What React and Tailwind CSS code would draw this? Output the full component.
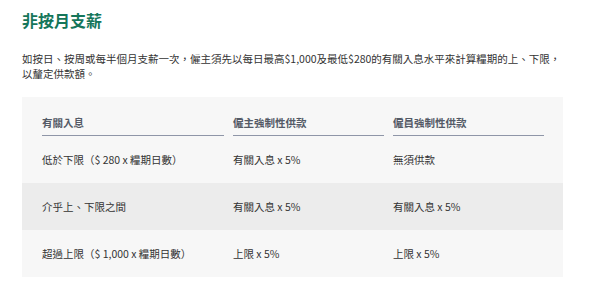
export default function App() {
  const rows = [
    { a: "低於下限（$ 280 x 糧期日數）", b: "有關入息 x 5%", c: "無須供款", bg: "bg-[#f7f7f7]" },
    { a: "介乎上、下限之間", b: "有關入息 x 5%", c: "有關入息 x 5%", bg: "bg-[#ececec]" },
    { a: "超過上限（$ 1,000 x 糧期日數）", b: "上限 x 5%", c: "上限 x 5%", bg: "bg-[#f7f7f7]" },
  ];
  return (
    <div className="w-[600px] h-[290px] bg-white px-[22px] overflow-hidden text-[#333] font-['Noto_Sans_CJK_TC','Noto_Sans',sans-serif]">
      <h1 className="pt-[8px] text-[16px] leading-[24px] font-bold text-[#15765a]">非按月支薪</h1>
      <p className="mt-[19px] text-[10.5px] leading-[15px] whitespace-nowrap">
        如按日、按周或每半個月支薪一次，僱主須先以每日最高$1,000及最低$280的有關入息水平來計算糧期的上、下限，
        <br />
        以釐定供款額。
      </p>
      <div className="mt-[16px] w-[541px] text-[10.5px] leading-[15px]">
        <div className="bg-[#f7f7f7] px-[20px] pt-[18px] grid grid-cols-[182px_151px_151px] gap-x-[9px] font-bold text-[#545a66]">
          <div className="pb-[5px] border-b border-[#8f96a8]">有關入息</div>
          <div className="pb-[5px] border-b border-[#8f96a8]">僱主強制性供款</div>
          <div className="pb-[5px] border-b border-[#8f96a8]">僱員強制性供款</div>
        </div>
        {rows.map((r, i) => (
          <div key={i} className={`${r.bg} px-[20px] h-[47px] grid grid-cols-[182px_151px_151px] gap-x-[9px] items-center`}>
            <div>{r.a}</div>
            <div>{r.b}</div>
            <div>{r.c}</div>
          </div>
        ))}
      </div>
    </div>
  );
}
